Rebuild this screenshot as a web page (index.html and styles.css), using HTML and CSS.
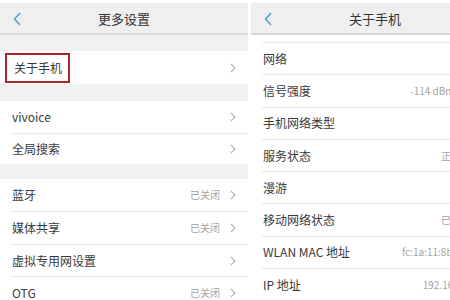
FILE: index.html
```html
<!DOCTYPE html>
<html lang="zh">
<head>
<meta charset="utf-8">
<link rel="stylesheet" href="styles.css">
</head>
<body>
<div class="stage">
  <section class="panel left">
    <header class="header">
      <svg class="back" width="8" height="14" viewBox="0 0 8 14"><polyline points="7,1 1.5,7 7,13" fill="none" stroke="#5a9fcc" stroke-width="1.6"/></svg>
      <span class="title">更多设置</span>
    </header>
    <div class="spacer s16"></div>
    <div class="group">
      <div class="row h33"><div class="inner"><span class="label boxed">关于手机</span><span class="chev"><svg width="6" height="10" viewBox="0 0 6 10"><polyline points="1,1 5,5 1,9" fill="none" stroke="#b4b4b4" stroke-width="1.2"/></svg></span></div></div>
    </div>
    <div class="spacer s17"></div>
    <div class="group">
      <div class="row"><div class="inner"><span class="label">vivoice</span><span class="chev"><svg width="6" height="10" viewBox="0 0 6 10"><polyline points="1,1 5,5 1,9" fill="none" stroke="#b4b4b4" stroke-width="1.2"/></svg></span></div></div>
      <div class="row h31"><div class="inner line"><span class="label">全局搜索</span><span class="chev"><svg width="6" height="10" viewBox="0 0 6 10"><polyline points="1,1 5,5 1,9" fill="none" stroke="#b4b4b4" stroke-width="1.2"/></svg></span></div></div>
    </div>
    <div class="spacer s15"></div>
    <div class="group">
      <div class="row"><div class="inner"><span class="label">蓝牙</span><span class="value">已关闭</span><span class="chev"><svg width="6" height="10" viewBox="0 0 6 10"><polyline points="1,1 5,5 1,9" fill="none" stroke="#b4b4b4" stroke-width="1.2"/></svg></span></div></div>
      <div class="row h33"><div class="inner line"><span class="label">媒体共享</span><span class="value">已关闭</span><span class="chev"><svg width="6" height="10" viewBox="0 0 6 10"><polyline points="1,1 5,5 1,9" fill="none" stroke="#b4b4b4" stroke-width="1.2"/></svg></span></div></div>
      <div class="row"><div class="inner line"><span class="label">虚拟专用网设置</span><span class="chev"><svg width="6" height="10" viewBox="0 0 6 10"><polyline points="1,1 5,5 1,9" fill="none" stroke="#b4b4b4" stroke-width="1.2"/></svg></span></div></div>
      <div class="row"><div class="inner line"><span class="label">OTG</span><span class="value">已关闭</span><span class="chev"><svg width="6" height="10" viewBox="0 0 6 10"><polyline points="1,1 5,5 1,9" fill="none" stroke="#b4b4b4" stroke-width="1.2"/></svg></span></div></div>
    </div>
  </section>
  <section class="panel right">
    <header class="header">
      <svg class="back" width="8" height="14" viewBox="0 0 8 14"><polyline points="7,1 1.5,7 7,13" fill="none" stroke="#5a9fcc" stroke-width="1.6"/></svg>
      <span class="title">关于手机</span>
    </header>
    <div class="info">
      <div class="irow"><div class="iinner"><span class="label">网络</span><span class="ival">无服务</span></div></div>
      <div class="irow"><div class="iinner"><span class="label">信号强度</span><span class="ival">-114 dBm 0 asu</span></div></div>
      <div class="irow"><div class="iinner"><span class="label">手机网络类型</span><span class="ival">未知</span></div></div>
      <div class="irow"><div class="iinner"><span class="label">服务状态</span><span class="ival">正在服务</span></div></div>
      <div class="irow"><div class="iinner"><span class="label">漫游</span><span class="ival">未漫游</span></div></div>
      <div class="irow"><div class="iinner"><span class="label">移动网络状态</span><span class="ival">已经断开</span></div></div>
      <div class="irow"><div class="iinner"><span class="label">WLAN MAC 地址</span><span class="ival">fc:1a:11:8b:2e:4d</span></div></div>
      <div class="irow"><div class="iinner"><span class="label">IP 地址</span><span class="ival">192.168.1.10</span></div></div>
    </div>
  </section>
</div>
</body>
</html>
```
FILE: styles.css
```css
html, body {
  margin: 0;
  padding: 0;
  background: #ffffff;
}
body {
  width: 450px;
  height: 300px;
  overflow: hidden;
  font-family: "Noto Sans CJK SC", "Noto Sans", sans-serif;
  color: #3a3a3a;
}
.stage {
  display: flex;
  gap: 3px;
  padding-top: 3px;
  width: 450px;
  height: 297px;
  overflow: hidden;
}
.panel {
  flex: 0 0 auto;
  display: flex;
  flex-direction: column;
}
.left {
  width: 248px;
  background: #f1f1f1;
}
.right {
  width: 230px;
  background: #ffffff;
}
.header {
  position: relative;
  height: 30px;
  border-bottom: 2px solid #d8d8d8;
  background: #efefef;
  display: flex;
  align-items: center;
  justify-content: center;
  flex: 0 0 auto;
}
.right .header {
  width: 248px;
}
.back {
  position: absolute;
  left: 13px;
  top: 9px;
}
.title {
  font-size: 13px;
  color: #333;
  line-height: 1;
}
.spacer { flex: 0 0 auto; }
.s16 { height: 16px; }
.s17 { height: 17px; }
.s15 { height: 15px; }
.group {
  background: #ffffff;
  display: flex;
  flex-direction: column;
}
.row {
  height: 32px;
  padding-left: 11px;
  display: flex;
}
.row.h33 { height: 33px; }
.row.h31 { height: 31px; }
.inner {
  flex: 1;
  display: flex;
  align-items: center;
  padding-left: 1px;
  padding-right: 12px;
  box-sizing: border-box;
}
.inner.line {
  border-top: 1px solid #e9e9e9;
}
.label {
  font-size: 12px;
  line-height: 1;
  color: #3a3a3a;
  flex: 1;
  white-space: nowrap;
}
.label.boxed {
  flex: 0 0 auto;
  margin-left: -7px;
  padding: 7px 6px 7px 7px;
  border: 2px solid #a3282c;
  margin-right: auto;
}
.value {
  font-size: 10px;
  color: #a2a2a2;
  margin-right: 10px;
  line-height: 1;
}
.chev {
  display: flex;
  width: 6px;
  height: 10px;
}
.info {
  padding-top: 7px;
  display: flex;
  flex-direction: column;
}
.irow {
  height: 32.3px;
  padding-left: 11px;
  display: flex;
  flex: 0 0 auto;
}
.iinner {
  flex: 1;
  display: flex;
  align-items: center;
  border-top: 1px solid #e9e9e9;
  box-sizing: border-box;
  padding-left: 1px;
}
.ival {
  font-size: 10px;
  color: #a2a2a2;
  line-height: 1;
  white-space: nowrap;
}
```
